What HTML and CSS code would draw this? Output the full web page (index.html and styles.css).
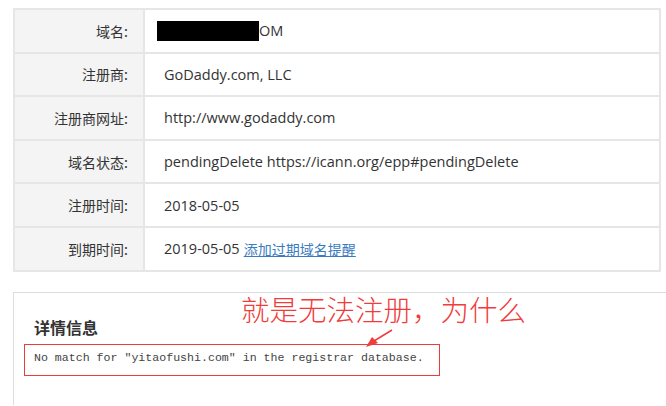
FILE: index.html
```html
<!DOCTYPE html>
<html lang="zh-CN">
<head>
<meta charset="utf-8">
<link rel="stylesheet" href="styles.css">
</head>
<body>
<div class="page">
  <div class="info">
    <div class="label">域名:</div>
    <div class="value"><span class="redact"></span>OM</div>
    <div class="label">注册商:</div>
    <div class="value">GoDaddy.com, LLC</div>
    <div class="label">注册商网址:</div>
    <div class="value">http://www.godaddy.com</div>
    <div class="label">域名状态:</div>
    <div class="value">pendingDelete https://icann.org/epp#pendingDelete</div>
    <div class="label">注册时间:</div>
    <div class="value">2018-05-05</div>
    <div class="label">到期时间:</div>
    <div class="value">2019-05-05 <a class="link" href="#">添加过期域名提醒</a></div>
  </div>
  <div class="detail">
    <h3 class="detail-title">详情信息</h3>
    <pre class="whois">No match for "yitaofushi.com" in the registrar database.</pre>
    <div class="note">就是无法注册，为什么</div>
    <svg class="arrow" width="30" height="20" viewBox="0 0 30 20">
      <line x1="28" y1="1" x2="10" y2="12" stroke="#f03c3c" stroke-width="1.5"/>
      <polygon points="2,18 8,8 14,14" fill="#f03c3c"/>
    </svg>
  </div>
</div>
</body>
</html>
```
FILE: styles.css
```css
html, body {
  margin: 0;
  padding: 0;
  background: #fff;
  overflow: hidden;
}
.page {
  padding: 8px 5px 0 13px;
  font-family: "Open Sans", "Noto Sans CJK SC", sans-serif;
  color: #333;
}
.info {
  display: grid;
  grid-template-columns: 128px 1fr;
  grid-auto-rows: 41.6px;
  gap: 2px;
  padding: 2px;
  background: #e6e6e6;
  width: 644px;
}
.label {
  background: #f4f4f4;
  text-align: right;
  padding-right: 15px;
  font-size: 14px;
  display: flex;
  align-items: center;
  justify-content: flex-end;
  font-family: "Noto Sans CJK SC", sans-serif;
}
.value {
  background: #fff;
  padding-left: 19px;
  font-size: 14.5px;
  display: flex;
  align-items: center;
  white-space: nowrap;
}
.redact {
  display: inline-block;
  width: 102px;
  height: 20px;
  background: #000;
  margin-left: -7px;
}
.link {
  color: #3a7cbf;
  text-decoration: underline;
  font-family: "Noto Sans CJK SC", sans-serif;
  font-size: 14px;
  margin-left: 4px;
}
.detail {
  position: relative;
  box-sizing: border-box;
  margin-top: 20px;
  margin-right: -20px;
  height: 113px;
  border-top: 1px solid #ddd;
  border-left: 1px solid #ddd;
  padding: 23px 0 0 10px;
}
.detail-title {
  margin: 0 0 6px 10px;
  font-size: 16px;
  font-weight: bold;
  line-height: 22px;
  font-family: "Noto Sans CJK SC", sans-serif;
  color: #333;
}
.whois {
  display: inline-block;
  margin: 0;
  border: 1px solid #ee3b3b;
  padding: 0 15px 0 9px;
  height: 30px;
  line-height: 25px;
  font-family: "Liberation Mono", monospace;
  font-size: 11.6px;
  color: #444;
}
.note {
  position: absolute;
  left: 227px;
  top: -2px;
  font-family: "Noto Sans CJK SC", sans-serif;
  font-weight: 300;
  font-size: 28.5px;
  line-height: 36px;
  color: #f03c3c;
}
.arrow {
  position: absolute;
  left: 350px;
  top: 36px;
}
```
